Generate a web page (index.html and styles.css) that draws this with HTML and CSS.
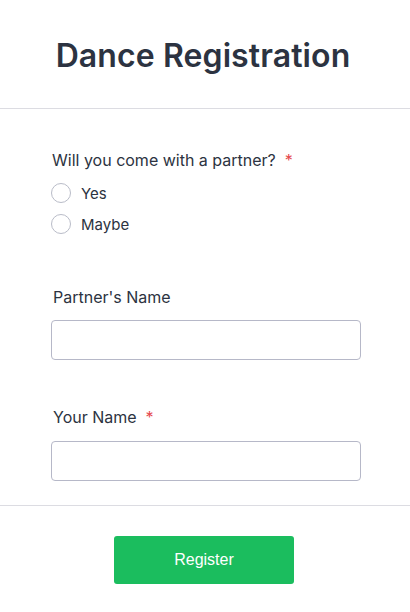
FILE: index.html
```html
<!DOCTYPE html>
<html>
<head>
<meta charset="utf-8">
<link rel="stylesheet" href="styles.css">
</head>
<body>
<div class="page">
  <header class="header">
    <h1 class="title">Dance Registration</h1>
  </header>
  <main class="form">
    <div class="field radio-field">
      <div class="label">Will you come with a partner?<span class="req">*</span></div>
      <div class="options">
        <label class="option"><span class="radio"></span><span class="opt-text">Yes</span></label>
        <label class="option"><span class="radio"></span><span class="opt-text">Maybe</span></label>
      </div>
    </div>
    <div class="field text-field first">
      <div class="label">Partner's Name</div>
      <div class="input"></div>
    </div>
    <div class="field text-field second">
      <div class="label">Your Name<span class="req">*</span></div>
      <div class="input"></div>
    </div>
  </main>
  <footer class="footer">
    <button class="btn">Register</button>
  </footer>
</div>
</body>
</html>
```
FILE: styles.css
```css
* { box-sizing: border-box; }
html, body { margin: 0; padding: 0; background: #fff; }
body { font-family: Inter, "Noto Sans", sans-serif; color: #2c3341; }
.page { width: 410px; }
.header {
  height: 109px;
  border-bottom: 1px solid #dcdce2;
  display: flex;
  align-items: center;
  justify-content: center;
  padding-right: 4px;
}
.title {
  margin: 0;
  font-size: 32px;
  font-weight: 600;
  color: #2c3341;
  letter-spacing: 0.1px;
  padding-top: 3px;
}
.form { padding: 41px 49px 24px 51px; }
.label {
  font-size: 16px;
  line-height: 20px;
  color: #2c3341;
  padding-left: 1px;
}
.req { color: #e5484d; margin-left: 9px; }
.options { margin-top: 13px; display: flex; flex-direction: column; gap: 11px; }
.option { display: flex; align-items: center; gap: 10px; height: 20px; }
.radio {
  width: 20px; height: 20px;
  border: 1px solid #b9bcc8;
  border-radius: 50%;
  background: #fff;
}
.opt-text { font-size: 15px; color: #2c3341; }
.text-field.first { margin-top: 53px; }
.text-field.second { margin-top: 47px; }
.text-field .label { padding-left: 2px; }
.input {
  margin-top: 13px;
  width: 310px;
  height: 40px;
  border: 1px solid #b6b8c8;
  border-radius: 4px;
}
.text-field.second .input { margin-top: 14px; }
.footer {
  border-top: 1px solid #dcdce2;
  display: flex;
  justify-content: center;
  padding-top: 30px;
  padding-right: 2px;
}
.btn {
  width: 180px;
  height: 48px;
  background: #1bbd5e;
  border: none;
  border-radius: 3px;
  color: #fff;
  font-family: "Liberation Sans", Arial, sans-serif;
  font-size: 16px;
  padding: 0;
}
```
